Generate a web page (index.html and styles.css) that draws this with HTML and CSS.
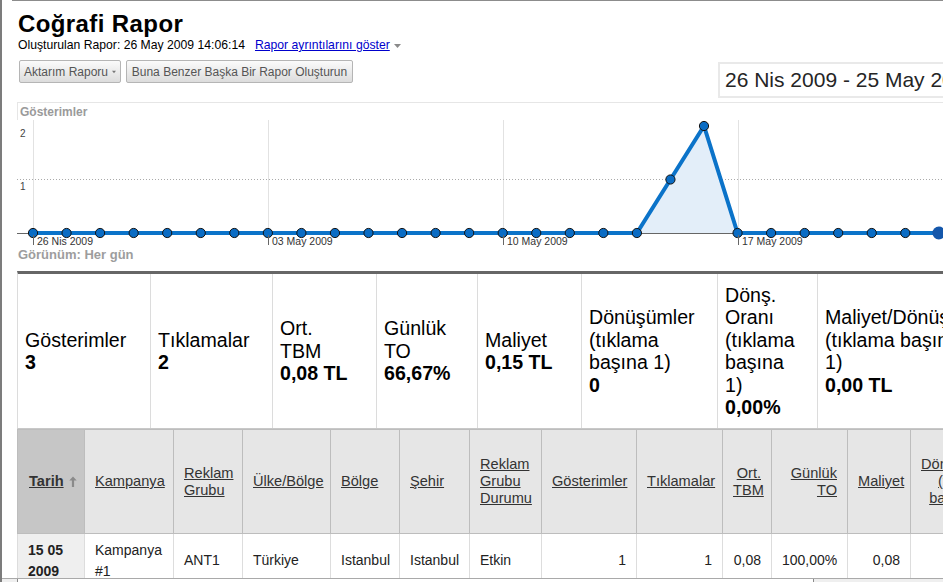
FILE: index.html
```html
<!DOCTYPE html>
<html lang="tr">
<head>
<meta charset="utf-8">
<title>Coğrafi Rapor</title>
<link rel="stylesheet" href="styles.css">
</head>
<body>
<div class="frame">
  <div class="topline"></div>
  <div class="page">
    <h1 class="title">Coğrafi Rapor</h1>
    <div class="subtitle">
      <span>Oluşturulan Rapor: 26 May 2009 14:06:14</span>
      <a href="#" class="details">Rapor ayrıntılarını göster</a>
      <svg class="caret" width="7" height="4" viewBox="0 0 7 4"><path d="M0 0h7L3.5 4z" fill="#8a8a8a"/></svg>
    </div>
    <div class="toolbar">
      <div class="buttons">
        <button class="btn btn-export">Aktarım Raporu<svg width="7" height="4" viewBox="0 0 7 4"><path d="M0 0h7L3.5 4z" fill="#777"/></svg></button>
        <button class="btn btn-new">Buna Benzer Başka Bir Rapor Oluşturun</button>
      </div>
      <div class="daterange">26 Nis 2009 - 25 May 2009</div>
    </div>

    <svg class="chart" width="1000" height="145" viewBox="17 102 1000 145" font-family="Liberation Sans, Arial, sans-serif">
      <line x1="17" y1="102.5" x2="1017" y2="102.5" stroke="#e6e6e6"/>
      <line x1="17.5" y1="102" x2="17.5" y2="120" stroke="#e6e6e6"/>
      <text x="20" y="116" font-size="12" font-weight="bold" fill="#9a9a9a">Gösterimler</text>
      <text x="20" y="137" font-size="10" fill="#444">2</text>
      <text x="20" y="190" font-size="10" fill="#444">1</text>
      <g stroke="#e2e2e2">
        <line x1="33.5" y1="120" x2="33.5" y2="233"/>
        <line x1="268.5" y1="120" x2="268.5" y2="233"/>
        <line x1="503.5" y1="120" x2="503.5" y2="233"/>
        <line x1="738.5" y1="120" x2="738.5" y2="233"/>
      </g>
      <line x1="17" y1="179.5" x2="1017" y2="179.5" stroke="#aaa" stroke-dasharray="1 2"/>
      <polygon points="636.9,233 670.45,179.5 704,126 737.55,233" fill="#e3eef9"/>
      <line x1="17" y1="233.5" x2="1017" y2="233.5" stroke="#666"/>
      <polyline fill="none" stroke="#0b73c9" stroke-width="4" stroke-linejoin="miter" points="33,233 66.55,233 100.1,233 133.65,233 167.2,233 200.75,233 234.3,233 267.85,233 301.4,233 334.95,233 368.5,233 402.05,233 435.6,233 469.15,233 502.7,233 536.25,233 569.8,233 603.35,233 636.9,233 670.45,179.5 704,126 737.55,233 771.1,233 804.65,233 838.2,233 871.75,233 905.3,233 938.85,233 972.4,233 1005.95,233"/>
      <g fill="#0a6cc4" stroke="#111" stroke-width="1">
        <circle cx="33" cy="233" r="4.6"/>
        <circle cx="66.55" cy="233" r="4.6"/>
        <circle cx="100.1" cy="233" r="4.6"/>
        <circle cx="133.65" cy="233" r="4.6"/>
        <circle cx="167.2" cy="233" r="4.6"/>
        <circle cx="200.75" cy="233" r="4.6"/>
        <circle cx="234.3" cy="233" r="4.6"/>
        <circle cx="267.85" cy="233" r="4.6"/>
        <circle cx="301.4" cy="233" r="4.6"/>
        <circle cx="334.95" cy="233" r="4.6"/>
        <circle cx="368.5" cy="233" r="4.6"/>
        <circle cx="402.05" cy="233" r="4.6"/>
        <circle cx="435.6" cy="233" r="4.6"/>
        <circle cx="469.15" cy="233" r="4.6"/>
        <circle cx="502.7" cy="233" r="4.6"/>
        <circle cx="536.25" cy="233" r="4.6"/>
        <circle cx="569.8" cy="233" r="4.6"/>
        <circle cx="603.35" cy="233" r="4.6"/>
        <circle cx="636.9" cy="233" r="4.6"/>
        <circle cx="670.45" cy="179.5" r="4.6"/>
        <circle cx="704" cy="126" r="4.6"/>
        <circle cx="737.55" cy="233" r="4.6"/>
        <circle cx="771.1" cy="233" r="4.6"/>
        <circle cx="804.65" cy="233" r="4.6"/>
        <circle cx="838.2" cy="233" r="4.6"/>
        <circle cx="871.75" cy="233" r="4.6"/>
        <circle cx="905.3" cy="233" r="4.6"/>
        <circle cx="972.4" cy="233" r="4.6"/>
        <circle cx="1005.95" cy="233" r="4.6"/>
      </g>
      <circle cx="938.85" cy="233" r="6.5" fill="#1457ab"/>
      <g stroke="#666">
        <line x1="33.5" y1="235" x2="33.5" y2="245"/>
        <line x1="268.5" y1="235" x2="268.5" y2="245"/>
        <line x1="503.5" y1="235" x2="503.5" y2="245"/>
        <line x1="738.5" y1="235" x2="738.5" y2="245"/>
      </g>
      <g font-size="10.5" fill="#333">
        <text x="37" y="245">26 Nis 2009</text>
        <text x="272" y="245">03 May 2009</text>
        <text x="507" y="245">10 May 2009</text>
        <text x="742" y="245">17 May 2009</text>
      </g>
    </svg>
    <div class="view">Görünüm: Her gün</div>

    <div class="summary">
      <div class="scell s1"><div>Gösterimler<br><b>3</b></div></div>
      <div class="scell s2"><div>Tıklamalar<br><b>2</b></div></div>
      <div class="scell s3"><div>Ort.<br>TBM<br><b>0,08 TL</b></div></div>
      <div class="scell s4"><div>Günlük<br>TO<br><b>66,67%</b></div></div>
      <div class="scell s5"><div>Maliyet<br><b>0,15 TL</b></div></div>
      <div class="scell s6"><div>Dönüşümler<br>(tıklama<br>başına 1)<br><b>0</b></div></div>
      <div class="scell s7"><div>Dönş.<br>Oranı<br>(tıklama<br>başına<br>1)<br><b>0,00%</b></div></div>
      <div class="scell s8"><div>Maliyet/Dönüşüm<br>(tıklama başına<br>1)<br><b>0,00 TL</b></div></div>
    </div>

    <table class="grid">
      <colgroup>
        <col class="c-date"><col class="c-camp"><col class="c-grp"><col class="c-country"><col class="c-region"><col class="c-city"><col class="c-status"><col class="c-impr"><col class="c-clicks"><col class="c-cpc"><col class="c-ctr"><col class="c-cost"><col class="c-conv">
      </colgroup>
      <thead>
        <tr>
          <th class="sorted"><a href="#" class="strong">Tarih</a><svg class="arrow" width="8" height="11" viewBox="0 0 8 11"><path d="M4 0.5L0.3 4.6h2.6V11h2.2V4.6h2.6z" fill="#8a8a8a"/></svg></th>
          <th><a href="#">Kampanya</a></th>
          <th><a href="#">Reklam<br>Grubu</a></th>
          <th><a href="#">Ülke/Bölge</a></th>
          <th><a href="#">Bölge</a></th>
          <th><a href="#">Şehir</a></th>
          <th><a href="#">Reklam<br>Grubu<br>Durumu</a></th>
          <th class="num"><a href="#">Gösterimler</a></th>
          <th class="num"><a href="#">Tıklamalar</a></th>
          <th class="num"><a href="#">Ort.<br>TBM</a></th>
          <th class="num"><a href="#">Günlük<br>TO</a></th>
          <th class="num"><a href="#">Maliyet</a></th>
          <th class="num"><a href="#">Dönüşümler<br>(tıklama<br>başına 1)</a></th>
        </tr>
      </thead>
      <tbody>
        <tr>
          <td class="sorted"><b>15 05<br>2009</b></td>
          <td>Kampanya<br>#1</td>
          <td>ANT1</td>
          <td>Türkiye</td>
          <td>Istanbul</td>
          <td>Istanbul</td>
          <td>Etkin</td>
          <td class="num">1</td>
          <td class="num">1</td>
          <td class="num">0,08</td>
          <td class="num">100,00%</td>
          <td class="num">0,08</td>
          <td class="num">0</td>
        </tr>
      </tbody>
    </table>
  </div>
  <div class="hscroll"><div class="thumb"></div></div>
</div>
</body>
</html>
```

FILE: styles.css
```css
* { box-sizing: border-box; }
html, body { margin: 0; padding: 0; background: #fff; }
body {
  font-family: "Liberation Sans", Arial, sans-serif;
  color: #000;
  overflow: hidden;
}
.frame {
  position: relative;
  height: 582px;
  overflow: hidden;
  border-left: 2px solid #7c7c7c;
}
.topline { height: 1px; margin-left: 10px; background: #8c8c8c; }
.page { width: 1200px; padding: 9px 0 0 15px; }

.title {
  margin: 0;
  padding-left: 1px;
  font-size: 24px;
  line-height: 28px;
  font-weight: bold;
  letter-spacing: 0.4px;
  color: #000;
}
.subtitle {
  display: flex;
  align-items: center;
  padding-left: 1px;
  font-size: 12.2px;
  line-height: 15px;
  color: #000;
}
.details { margin-left: 10px; color: #0000cc; text-decoration: underline; }
.caret { margin-left: 4px; }

.toolbar {
  display: grid;
  grid-template-columns: 701px 320px;
  align-items: start;
  margin-top: 7px;
}
.buttons { display: flex; gap: 5px; padding-left: 2px; }
.btn {
  height: 23px;
  display: flex;
  align-items: center;
  gap: 4px;
  padding: 0 4px;
  font: 12px "Liberation Sans", Arial, sans-serif;
  color: #555;
  white-space: nowrap;
  border: 1px solid #b5b5b5;
  border-radius: 2px;
  background: linear-gradient(#fbfbfb, #dcdcdc);
}
.btn-export { width: 102px; }
.btn-new { width: 227px; justify-content: center; }
.daterange {
  margin-top: 2px;
  height: 36px;
  padding-left: 5px;
  border: 2px solid #e9e9e9;
  font-size: 21px;
  line-height: 32px;
  color: #252525;
  white-space: nowrap;
}

.chart { display: block; margin-top: 4px; }
.view {
  padding-left: 1px;
  font-size: 13px;
  line-height: 15px;
  font-weight: bold;
  color: #9d9d9d;
}

.summary {
  display: flex;
  width: 1000px;
  margin-top: 9px;
  border-top: 3px solid #666;
  border-bottom: 1px solid #c8c8c8;
  border-left: 1px solid #dcdcdc;
  font-size: 19.6px;
  line-height: 22.5px;
  color: #000;
}
.scell {
  flex: none;
  height: 154px;
  display: flex;
  align-items: center;
  padding: 0 2px 0 7px;
  border-right: 1px solid #dcdcdc;
}
.s1 { width: 133px; }
.s2 { width: 122px; }
.s3 { width: 104px; }
.s4 { width: 101px; }
.s5 { width: 104px; }
.s6 { width: 136px; }
.s7 { width: 100px; }
.s8 { width: 180px; white-space: nowrap; }

.grid {
  border-collapse: collapse;
  table-layout: fixed;
  width: 983px;
  font-size: 14px;
}
.c-date { width: 67px; }
.c-camp { width: 89px; }
.c-grp { width: 69px; }
.c-country { width: 88px; }
.c-region { width: 69px; }
.c-city { width: 70px; }
.c-status { width: 72px; }
.c-impr { width: 95px; }
.c-clicks { width: 86px; }
.c-cpc { width: 49px; }
.c-ctr { width: 76px; }
.c-cost { width: 63px; }
.c-conv { width: 90px; }

.grid th {
  height: 104px;
  padding: 0 10px;
  background: #e6e6e6;
  border: 1px solid #bdbdbd;
  font-weight: normal;
  font-size: 14.6px;
  text-align: left;
  vertical-align: middle;
  line-height: 17px;
  white-space: nowrap;
}
.grid th a { color: #333; text-decoration: underline; }
.grid th a.strong { font-weight: bold; }
.grid th.sorted { background: #c6c6c6; padding-left: 11px; }
.grid .arrow { margin-left: 5px; vertical-align: -1px; }
.grid th.num, .grid td.num { text-align: right; }

.grid td {
  height: 54px;
  padding: 0 10px;
  vertical-align: middle;
  line-height: 21px;
  color: #222;
  border-left: 1px solid #dddddd;
  border-right: 1px solid #dddddd;
  white-space: nowrap;
}
.grid td.sorted { background: #efefef; padding-left: 10px; }

.hscroll {
  position: absolute;
  left: 0;
  right: 0;
  bottom: 0;
  height: 4px;
  border-top: 1px solid #a9a9a9;
  background: #efefef;
}
.thumb {
  height: 100%;
  width: 797px;
  margin-left: 15px;
  background: #fff;
  border-left: 1px solid #8a8a8a;
  border-right: 1px solid #8a8a8a;
}
```
